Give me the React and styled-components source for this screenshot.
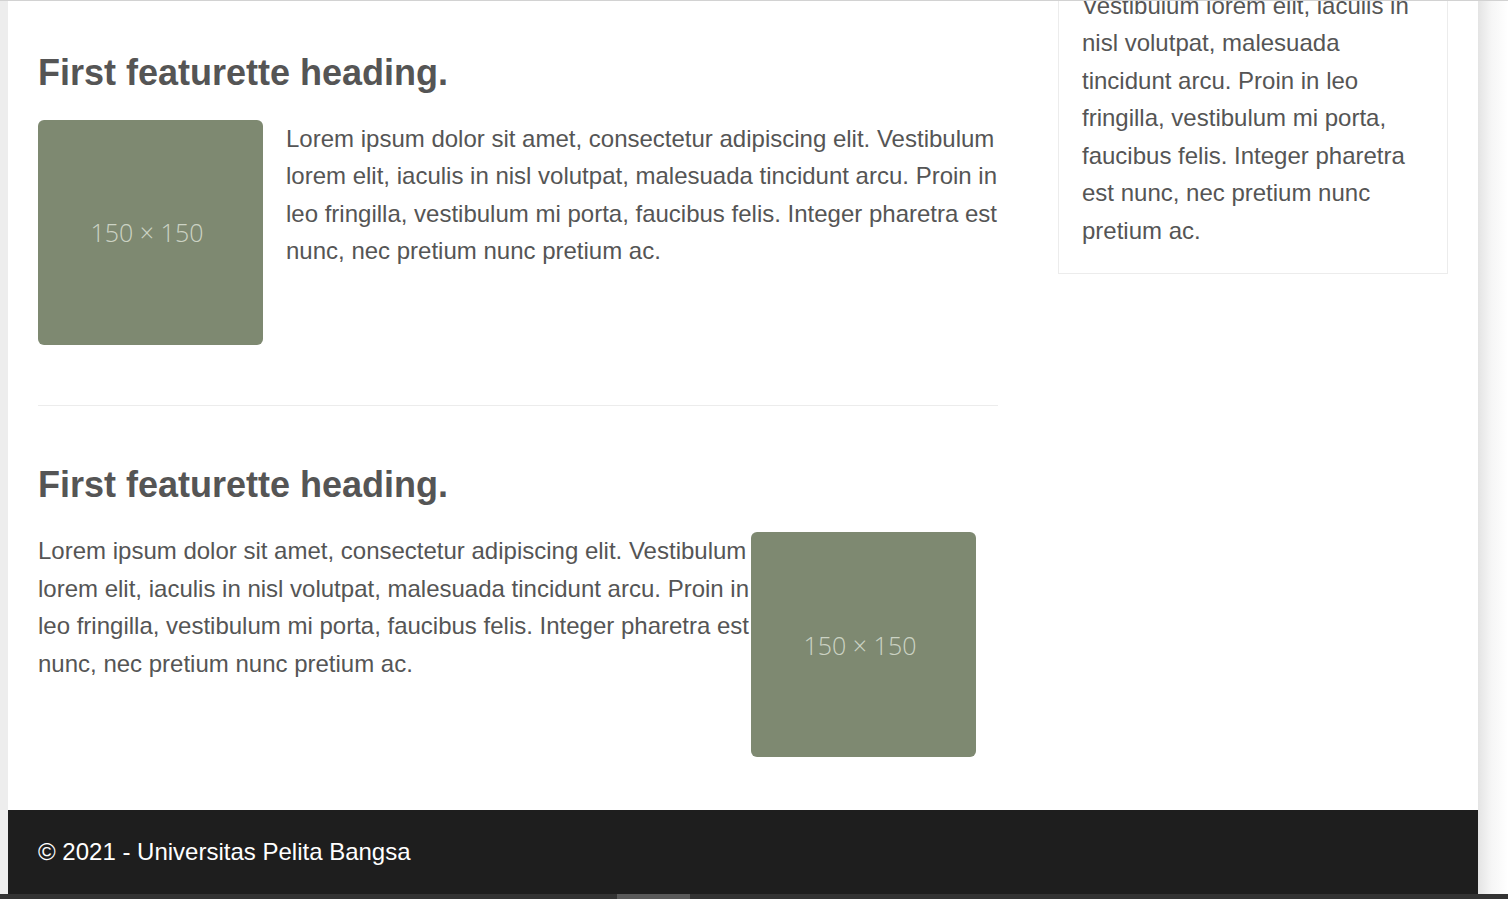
import React from "react";
import styled, { createGlobalStyle } from "styled-components";

const SCROLL_Y = 113;

const GlobalStyle = createGlobalStyle`
  html, body {
    margin: 0;
    padding: 0;
    height: 100%;
    overflow: hidden;
    background: #ffffff;
  }
  body {
    font-family: "Liberation Sans", Arial, sans-serif;
  }
  * { box-sizing: border-box; }
`;

const Frame = styled.div`
  height: 899px;
  display: flex;
  flex-direction: column;
  border-top: 1px solid #d2d2d2;
  overflow: hidden;
`;

const Viewport = styled.div`
  flex: 1;
  display: flex;
  min-height: 0;
  overflow: hidden;
`;

const LeftGutter = styled.div`
  width: 8px;
  flex-shrink: 0;
  background: #ededed;
`;

const RightShade = styled.div`
  flex: 1;
  background: linear-gradient(to right, #e4e4e4 0%, #f6f6f6 45%, #ffffff 100%);
`;

const Page = styled.div`
  width: 1470px;
  flex-shrink: 0;
  background: #ffffff;
  display: flex;
  flex-direction: column;
  justify-content: flex-end;
  overflow: hidden;
`;

const Content = styled.div`
  display: flex;
  align-items: flex-start;
  gap: 60px;
  padding: 0 30px;
  margin-top: ${(p) => -p.$scroll}px;
`;

const MainColumn = styled.main`
  width: 960px;
  flex-shrink: 0;
  padding: ${(p) => p.$scroll + 50}px 0 53px;
`;

const Featurette = styled.section`
  display: flex;
  flex-direction: column;
`;

const Heading = styled.h2`
  margin: 0 0 26px;
  font-size: 36px;
  line-height: 1.2;
  font-weight: 700;
  color: #555555;
`;

const Row = styled.div`
  display: flex;
  flex-direction: ${(p) => (p.$reverse ? "row-reverse" : "row")};
  justify-content: flex-end;
  align-items: flex-start;
`;

const Placeholder = styled.div`
  width: 225px;
  height: 225px;
  flex-shrink: 0;
  margin-right: ${(p) => (p.$reverse ? "22px" : "23px")};
  padding-right: 7px;
  background: #7e8971;
  border-radius: 6px;
  display: flex;
  align-items: center;
  justify-content: center;
  font-family: "Open Sans", "Noto Sans", sans-serif;
  font-weight: 300;
  font-size: 25px;
  color: #ccd3c4;
`;

const Text = styled.p`
  flex: 1;
  margin: 0;
  font-size: 24px;
  line-height: 37.5px;
  color: #555555;
`;

const Divider = styled.hr`
  border: 0;
  border-top: 1px solid #ececec;
  margin: 60px 0 57px;
`;

const Sidebar = styled.aside`
  width: 390px;
  flex-shrink: 0;
`;

const Card = styled.div`
  border: 1px solid #ececec;
  padding: 23px 24px 24px 23px;
`;

const CardText = styled.p`
  margin: 0;
  font-size: 24px;
  line-height: 37.5px;
  color: #555555;
`;

const Footer = styled.footer`
  height: 84px;
  flex-shrink: 0;
  background: #1e1e1e;
  color: #ffffff;
  display: flex;
  align-items: center;
  padding: 0 30px;
  font-size: 24px;
`;

const Scrollbar = styled.div`
  height: 5px;
  flex-shrink: 0;
  background: #333333;
  display: flex;
  padding-left: 617px;
`;

const Thumb = styled.div`
  width: 73px;
  background: #5a5a5a;
`;

const LOREM =
  "Lorem ipsum dolor sit amet, consectetur adipiscing elit. Vestibulum lorem elit, iaculis in nisl volutpat, malesuada tincidunt arcu. Proin in leo fringilla, vestibulum mi porta, faucibus felis. Integer pharetra est nunc, nec pretium nunc pretium ac.";

function FeaturetteBlock({ reverse }) {
  return (
    <Featurette>
      <Heading>First featurette heading.</Heading>
      <Row $reverse={reverse}>
        <Placeholder $reverse={reverse}>150 × 150</Placeholder>
        <Text>{LOREM}</Text>
      </Row>
    </Featurette>
  );
}

export default function App() {
  return (
    <>
      <GlobalStyle />
      <Frame>
        <Viewport>
          <LeftGutter />
          <Page>
            <Content $scroll={SCROLL_Y}>
              <MainColumn $scroll={SCROLL_Y}>
                <FeaturetteBlock />
                <Divider />
                <FeaturetteBlock reverse />
              </MainColumn>
              <Sidebar>
                <Card>
                  <CardText>{LOREM}</CardText>
                </Card>
              </Sidebar>
            </Content>
            <Footer>© 2021 - Universitas Pelita Bangsa</Footer>
          </Page>
          <RightShade />
        </Viewport>
        <Scrollbar>
          <Thumb />
        </Scrollbar>
      </Frame>
    </>
  );
}
